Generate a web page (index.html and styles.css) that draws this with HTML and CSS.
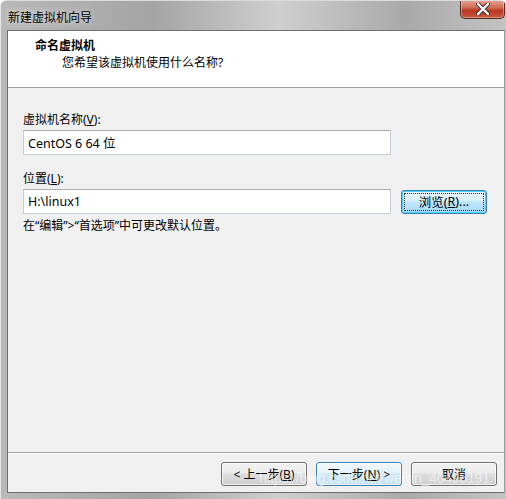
FILE: index.html
```html
<!DOCTYPE html>
<html lang="zh-CN">
<head>
    <meta charset="UTF-8">
    <title>新建虚拟机向导</title>
    <link rel="stylesheet" href="styles.css">
</head>
<body>
    <div class="window">
        <div class="titlebar">
            <span class="title">新建虚拟机向导</span>
            <button type="button" class="close">
                <svg width="14" height="12" viewBox="0 0 14 12">
                    <path d="M2 1 L12 11 M12 1 L2 11" stroke="#3a2a2a" stroke-width="4.2" stroke-linecap="round"/>
                    <path d="M2 1 L12 11 M12 1 L2 11" stroke="#ffffff" stroke-width="2.4" stroke-linecap="round"/>
                </svg>
            </button>
        </div>
        <div class="client">
            <div class="header">
                <div class="head-title">命名虚拟机</div>
                <div class="head-sub">您希望该虚拟机使用什么名称?</div>
            </div>
            <div class="body">
                <label class="label">虚拟机名称(<u>V</u>):</label>
                <div class="row">
                    <input type="text" class="field" value="CentOS 6 64 位">
                </div>
                <label class="label second">位置(<u>L</u>):</label>
                <div class="row">
                    <input type="text" class="field" value="H:\linux1">
                    <button type="button" class="btn focus"><span class="focus-ring">浏览(<u>R</u>)...</span></button>
                </div>
                <div class="hint">在“编辑”&gt;“首选项”中可更改默认位置。</div>
            </div>
            <div class="footer">
                <button type="button" class="btn">&lt; 上一步(<u>B</u>)</button>
                <button type="button" class="btn default">下一步(<u>N</u>) &gt;</button>
                <button type="button" class="btn">取消</button>
                <span class="watermark">https://blog.csdn.net/weixin_40495191</span>
            </div>
        </div>
    </div>
</body>
</html>
```

FILE: styles.css
```css
* {
    box-sizing: border-box;
}
body {
    margin: 0;
    font-family: "Noto Sans", "Noto Sans CJK SC", sans-serif;
    font-size: 12px;
    color: #000;
}
.window {
    position: relative;
    width: 506px;
    height: 499px;
    overflow: hidden;
    background: linear-gradient(90deg, #b9b9b9 0%, #a4a4a4 30%, #cfcfcf 55%, #a9a9a9 80%, #c4c4c4 100%);
    border-left: 1px solid #e6e6e6;
    border-top: 1px solid #dcdcdc;
    border-radius: 6px 6px 0 0;
    display: flex;
    flex-direction: column;
    padding: 0 1px 6px 6px;
}
.titlebar {
    height: 29px;
    display: flex;
    align-items: flex-start;
    justify-content: space-between;
}
.title {
    margin-top: 7px;
    margin-left: 1px;
    color: #000;
    text-shadow: 0 0 6px rgba(255,255,255,0.9);
}
.close {
    width: 45px;
    height: 19px;
    margin-top: -1px;
    border: 1px solid #5a2a22;
    border-top: none;
    border-radius: 0 0 5px 5px;
    background: linear-gradient(#e8a493 0%, #d0705a 40%, #b8381f 60%, #c9583f 100%);
    box-shadow: inset 0 0 0 1px rgba(255,255,255,0.35);
    display: flex;
    align-items: center;
    justify-content: center;
    padding: 0;
}
.client {
    flex: 1;
    display: flex;
    flex-direction: column;
    background: #f0f0f0;
    border: 1px solid #6e6e6e;
    border-right-color: #9a9a9a;
}
.header {
    height: 57px;
    background: #fff;
    border-bottom: 1px solid #a0a0a0;
    padding: 6px 0 0 27px;
}
.head-title {
    font-weight: bold;
    line-height: 17px;
}
.head-sub {
    margin-left: 27px;
    line-height: 17px;
}
.body {
    flex: 1;
    padding: 24px 0 0 15px;
    display: flex;
    flex-direction: column;
}
.label {
    line-height: 16px;
}
.label.second {
    margin-top: 16px;
}
.row {
    display: flex;
    align-items: center;
    gap: 10px;
    margin-top: 2px;
}
.field {
    width: 368px;
    height: 25px;
    border: 1px solid #c5cdd8;
    border-top-color: #abadb3;
    background: #fff;
    font: inherit;
    font-size: 12.5px;
    padding: 0 4px;
    outline: none;
}
.btn {
    width: 86px;
    height: 24px;
    border: 1px solid #707070;
    border-radius: 3px;
    background: linear-gradient(#f2f2f2 0%, #ebebeb 45%, #dddddd 50%, #cfcfcf 100%);
    box-shadow: inset 0 0 0 1px rgba(255,255,255,0.7);
    font: inherit;
    color: #000;
    padding: 0;
}
.btn.focus {
    border-color: #3c7fb1;
    background: linear-gradient(#eaf6fd 0%, #d9f0fc 45%, #bee6fd 50%, #a7d9f5 100%);
    box-shadow: inset 0 0 0 1px #48d1fa;
    padding: 2px;
    font-size: 12.5px;
}
.focus-ring {
    display: flex;
    align-items: center;
    justify-content: center;
    height: 100%;
    border: 1px dotted #5a1a1a;
}
.btn.default {
    border-color: #3c7fb1;
    background: linear-gradient(#f2f8fb 0%, #e5f1f8 45%, #d4e8f3 50%, #c6dfee 100%);
}
.hint {
    margin-top: 4px;
    line-height: 16px;
}
.footer {
    position: relative;
    height: 40px;
    border-top: 1px solid #a0a0a0;
    box-shadow: inset 0 1px 0 #fff;
    display: flex;
    justify-content: flex-end;
    align-items: flex-start;
    gap: 9px;
    padding: 9px 7px 0 0;
}
.watermark {
    position: absolute;
    left: 251px;
    top: 17px;
    font-family: "Liberation Sans", sans-serif;
    font-size: 14px;
    color: rgba(255,255,255,0.5);
    letter-spacing: -0.2px;
    white-space: nowrap;
    pointer-events: none;
}
```
